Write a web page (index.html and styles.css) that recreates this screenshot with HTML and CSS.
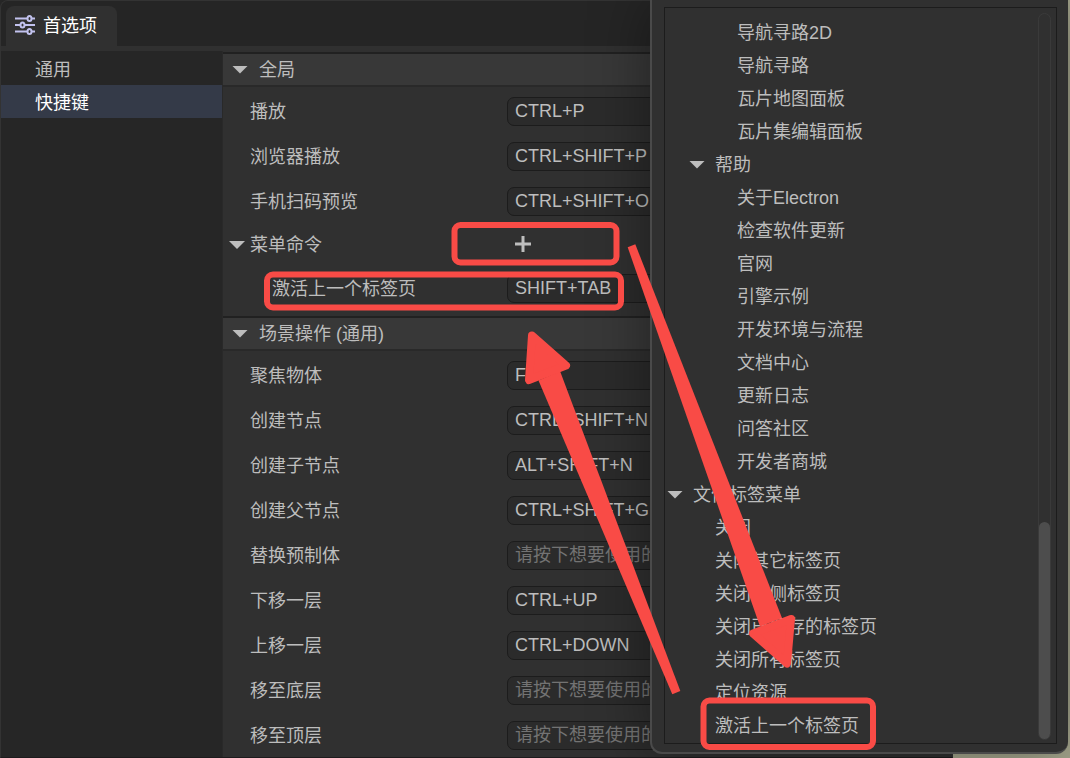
FILE: index.html
```html
<!DOCTYPE html>
<html lang="zh-CN">
<head>
<meta charset="utf-8">
<meta name="viewport" content="width=device-width, initial-scale=1">
<title>首选项</title>
<link rel="stylesheet" href="styles.css">
</head>
<body>
<div class="window">
  <header class="tabbar">
    <button class="tab" type="button">
      <svg class="tab-icon" width="20" height="20" viewBox="0 0 20 20" aria-hidden="true">
        <path d="M0 3.500h12M17 3.500h3M0 10h5M10 10H20M0 16.500h12M17 16.500h3"/>
        <ellipse cx="14.500" cy="3.500" rx="2" ry="2.500"/>
        <ellipse cx="7.500" cy="10" rx="2" ry="2.500"/>
        <ellipse cx="14.500" cy="16.500" rx="2" ry="2.500"/>
      </svg>
      <span>首选项</span>
    </button>
  </header>
  <div class="body">
    <nav class="sidebar">
      <button class="nav-item" type="button">通用</button>
      <button class="nav-item selected" type="button" aria-current="page">快捷键</button>
    </nav>
    <main class="settings">
      <section>
        <h2 class="section-head"><button class="section-toggle" type="button" aria-expanded="true"><span class="caret"></span>全局</button></h2>
        <div class="rows">
          <div class="row"><label for="k1">播放</label><input id="k1" type="text" value="CTRL+P"></div>
          <div class="row"><label for="k2">浏览器播放</label><input id="k2" type="text" value="CTRL+SHIFT+P"></div>
          <div class="row"><label for="k3">手机扫码预览</label><input id="k3" type="text" value="CTRL+SHIFT+O"></div>
          <div class="row group">
            <button class="group-toggle" type="button" aria-expanded="true"><span class="caret"></span>菜单命令</button>
            <button class="add" type="button" aria-label="添加">
              <svg width="18" height="18" viewBox="0 0 18 18" aria-hidden="true"><path d="M9 1v16M1 9h16"/></svg>
            </button>
          </div>
          <div class="row child"><label for="k4">激活上一个标签页</label><input id="k4" type="text" value="SHIFT+TAB"></div>
        </div>
      </section>
      <section>
        <h2 class="section-head"><button class="section-toggle" type="button" aria-expanded="true"><span class="caret"></span>场景操作 (通用)</button></h2>
        <div class="rows">
          <div class="row"><label for="s1">聚焦物体</label><input id="s1" type="text" value="F"></div>
          <div class="row"><label for="s2">创建节点</label><input id="s2" type="text" value="CTRL+SHIFT+N"></div>
          <div class="row"><label for="s3">创建子节点</label><input id="s3" type="text" value="ALT+SHIFT+N"></div>
          <div class="row"><label for="s4">创建父节点</label><input id="s4" type="text" value="CTRL+SHIFT+G"></div>
          <div class="row"><label for="s5">替换预制体</label><input id="s5" type="text" placeholder="请按下想要使用的快捷键"></div>
          <div class="row"><label for="s6">下移一层</label><input id="s6" type="text" value="CTRL+UP"></div>
          <div class="row"><label for="s7">上移一层</label><input id="s7" type="text" value="CTRL+DOWN"></div>
          <div class="row"><label for="s8">移至底层</label><input id="s8" type="text" placeholder="请按下想要使用的快捷键"></div>
          <div class="row"><label for="s9">移至顶层</label><input id="s9" type="text" placeholder="请按下想要使用的快捷键"></div>
        </div>
      </section>
    </main>
  </div>
</div>

<aside class="popup">
  <div class="popup-frame">
    <div class="tree">
      <button class="node level-3" type="button">导航寻路2D</button>
      <button class="node level-3" type="button">导航寻路</button>
      <button class="node level-3" type="button">瓦片地图面板</button>
      <button class="node level-3" type="button">瓦片集编辑面板</button>
      <button class="node level-2 branch" type="button" aria-expanded="true"><span class="caret"></span>帮助</button>
      <button class="node level-3" type="button">关于Electron</button>
      <button class="node level-3" type="button">检查软件更新</button>
      <button class="node level-3" type="button">官网</button>
      <button class="node level-3" type="button">引擎示例</button>
      <button class="node level-3" type="button">开发环境与流程</button>
      <button class="node level-3" type="button">文档中心</button>
      <button class="node level-3" type="button">更新日志</button>
      <button class="node level-3" type="button">问答社区</button>
      <button class="node level-3" type="button">开发者商城</button>
      <button class="node level-1 branch" type="button" aria-expanded="true"><span class="caret"></span>文件标签菜单</button>
      <button class="node level-2" type="button">关闭</button>
      <button class="node level-2" type="button">关闭其它标签页</button>
      <button class="node level-2" type="button">关闭右侧标签页</button>
      <button class="node level-2" type="button">关闭已保存的标签页</button>
      <button class="node level-2" type="button">关闭所有标签页</button>
      <button class="node level-2" type="button">定位资源</button>
      <button class="node level-2" type="button">激活上一个标签页</button>
    </div>
    <div class="scrollbar"><div class="thumb"></div></div>
  </div>
</aside>

<svg class="marks" width="1070" height="758" viewBox="0 0 1070 758" aria-hidden="true">
  <g class="mark-box">
    <rect x="454.500" y="225" width="162" height="37.500" rx="6"/>
    <rect x="267" y="274.500" width="354" height="33" rx="6"/>
    <rect x="703.500" y="700.500" width="169.500" height="46.500" rx="6"/>
  </g>
  <g class="mark-arrow">
    <path d="M627.700 247.300L635.300 244.300L782 618L760 626.500Z"/>
    <path class="head" d="M791 619L753 633.500L787 663.500Z"/>
    <path d="M672.300 694.300L680.300 691L560 371L538.500 380.500Z"/>
    <path class="head" d="M532 335.500L566 365.500L529 380Z"/>
  </g>
</svg>
</body>
</html>
```
FILE: styles.css
```css
* {
  box-sizing: border-box;
}

body {
  margin: 0;
  height: 100vh;
  overflow: hidden;
  position: relative;
  background: linear-gradient(to right, #262626 50%, #a6a78e 50%);
  color: #bdbdbd;
  font: 18px/24px "Liberation Sans", "Noto Sans CJK SC", sans-serif;
}

button,
input {
  margin: 0;
  padding: 0;
  border: 0;
  background: none;
  color: inherit;
  font: inherit;
  text-align: left;
}

.window {
  display: flex;
  flex-direction: column;
  height: 100%;
  margin-right: 117px;
  border: 1px solid #333333;
  border-bottom-color: #1d1b1d;
  border-radius: 8px 0 0 0;
  background: #303030;
  overflow: hidden;
}

.tabbar {
  display: flex;
  align-items: flex-end;
  flex: none;
  height: 45px;
  padding-left: 5px;
  background: #252525;
}

.tab {
  display: flex;
  align-items: center;
  gap: 8px;
  height: 40px;
  padding: 0 20px 0 9px;
  border-radius: 8px 8px 0 0;
  background: #303030;
  color: #ffffff;
}

.tab-icon {
  margin-bottom: 2px;
  fill: none;
  stroke: #c2c2ee;
  stroke-width: 2;
}

.body {
  display: flex;
  flex: 1;
  min-height: 0;
  margin-top: 5px;
}

.sidebar {
  flex: none;
  width: 222px;
  padding-top: 1px;
  border-right: 1px solid #292929;
  background: #262626;
}

.nav-item {
  display: block;
  width: 100%;
  height: 33px;
  padding: 2px 0 0 34px;
}

.nav-item.selected {
  background: #343a48;
  color: #ffffff;
}

.settings {
  flex: 1;
  min-width: 0;
  padding-top: 1px;
  overflow: hidden;
}

.section-head {
  margin: 0;
  border-top: 2px solid #212121;
  border-bottom: 2px solid #292929;
  background: #383838;
  font: inherit;
}

.section-toggle {
  display: flex;
  align-items: center;
  gap: 11px;
  width: 100%;
  height: 31px;
  padding-left: 9px;
}

.caret {
  flex: none;
  width: 16px;
  height: 8px;
  background: #bdbdbd;
  clip-path: polygon(0 0, 100% 0, 50% 100%);
}

.rows {
  display: flex;
  flex-direction: column;
  gap: 16px;
  padding: 10px 10px 13px 27px;
}

.row {
  display: grid;
  grid-template-columns: 257px 1fr;
  align-items: center;
}

.row.child label {
  padding-left: 22px;
}

.row input {
  width: 100%;
  height: 29px;
  padding: 0 7px;
  border: 1px solid #1c1c1c;
  border-radius: 7px;
  background: #2b2b2b;
}

.row input::placeholder {
  color: #737373;
  opacity: 1;
}

.row.group {
  height: 26px;
}

.group-toggle {
  display: flex;
  align-items: center;
  gap: 5px;
  margin-left: -21px;
}

.add {
  display: flex;
  align-items: center;
  justify-content: center;
  width: 32px;
  height: 26px;
  padding-bottom: 2px;
}

.add svg {
  fill: none;
  stroke: #bdbdbd;
  stroke-width: 3;
}

.popup {
  position: absolute;
  inset: 0 2px 4px 650px;
  padding: 7px 11px 8px 12px;
  border-bottom: 2px solid #4a4a4a;
  border-left: 2px solid #4a4a4a;
  border-radius: 0 0 12px 12px;
  background: #303030;
  box-shadow: 0 0 60px rgba(0, 0, 0, 0.4);
}

.popup-frame {
  display: flex;
  height: 100%;
  border: 1px solid #1c1c1c;
  overflow: hidden;
}

.tree {
  flex: 1;
  padding-top: 8px;
}

.node {
  display: flex;
  align-items: center;
  width: 100%;
  height: 33px;
  padding-left: 27px;
}

.node.level-2 {
  padding-left: 50px;
}

.node.level-3 {
  padding-left: 72px;
}

.node.branch {
  gap: 10px;
  padding-left: 2px;
}

.node.level-2.branch {
  padding-left: 24px;
}

.scrollbar {
  display: flex;
  flex-direction: column;
  justify-content: flex-end;
  width: 13px;
  margin: 5px 5px 3px 0;
  border: 1px solid #3a3a3a;
  border-radius: 7px;
}

.thumb {
  height: 30%;
  border-radius: 6px;
  background: #4d4d4d;
}

.marks {
  position: absolute;
  top: 0;
  left: 0;
  pointer-events: none;
}

.mark-box {
  fill: none;
  stroke: #f94b46;
  stroke-width: 6;
}

.mark-arrow {
  fill: #f94b46;
}

.mark-arrow .head {
  stroke: #f94b46;
  stroke-width: 8;
  stroke-linejoin: round;
}
```
